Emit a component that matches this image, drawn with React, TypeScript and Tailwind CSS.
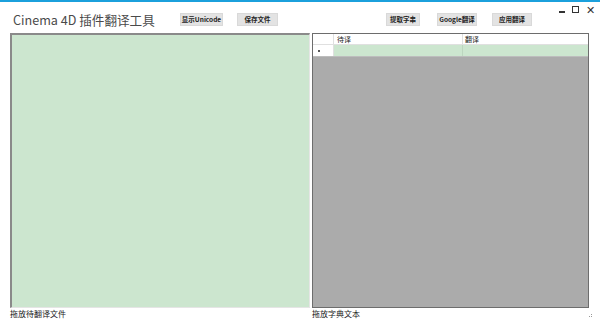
import React from "react";

const font = { fontFamily: '"Noto Sans CJK SC", "Noto Sans", sans-serif' };

function Btn({ label, w }: { label: string; w: string }) {
  return (
    <div
      className={`h-[13px] ${w} flex items-center justify-center whitespace-nowrap bg-[#e3e3e3] border border-[#d9d9d9] text-[6.5px] font-bold text-[#222] leading-none`}
    >
      {label}
    </div>
  );
}

export default function App() {
  return (
    <div
      className="w-[600px] h-[320px] bg-white overflow-hidden flex flex-col border-t-2 border-[#1ba0dc]"
      style={font}
    >
      <div className="h-[31px] flex items-start relative">
        <div className="ml-[13px] w-[155px] mt-[9px] text-[12.6px] leading-[18px] text-[#4a4a4a] whitespace-nowrap">
          Cinema 4D 插件翻译工具
        </div>
        <div className="ml-[12px] mt-[11px]">
          <Btn label="显示Unicode" w="w-[43px]" />
        </div>
        <div className="ml-[14px] mt-[11px]">
          <Btn label="保存文件" w="w-[41px]" />
        </div>
        <div className="ml-[108px] mt-[11px]">
          <Btn label="提取字串" w="w-[34px]" />
        </div>
        <div className="ml-[17px] mt-[11px]">
          <Btn label="Google翻译" w="w-[40px]" />
        </div>
        <div className="ml-[15px] mt-[11px]">
          <Btn label="应用翻译" w="w-[40px]" />
        </div>
        <div className="ml-auto mr-[5px] mt-[2px] flex items-center gap-[7px] text-[10px] text-[#333] leading-none">
          <span className="w-[6px] h-[2px] bg-[#333] mt-[5px]" />
          <span className="w-[7px] h-[7px] border border-[#333]" />
          <span className="text-[11px]">✕</span>
        </div>
      </div>
      <div className="flex pl-[10px] gap-[2px] h-[275px]">
        <div className="w-[300px] h-full bg-[#cce6cf] border-l-[2px] border-t-[2px] border-[#8a8a8a] border-r border-b border-r-[#e5e5e5] border-b-[#e5e5e5]" />
        <div className="w-[277px] h-full bg-[#ababab] border border-[#6d6d6d] flex flex-col">
          <div className="h-[11px] flex bg-white text-[7px] text-[#222] leading-[11px] border-b border-[#e0e0e0]">
            <div className="w-[21px] border-r border-[#e0e0e0]" />
            <div className="w-[129px] pl-[3px] border-r border-[#e0e0e0]">待译</div>
            <div className="flex-1 pl-[2px]">翻译</div>
          </div>
          <div className="h-[12px] flex border-b border-[#bdbdbd]">
            <div className="w-[21px] bg-white border-r border-[#e0e0e0] flex items-center pl-[5px]">
              <span className="w-[2px] h-[2px] bg-[#222] rounded-full" />
            </div>
            <div className="w-[129px] bg-[#cce6cf] border-r border-[#bcd6bf]" />
            <div className="flex-1 bg-[#cce6cf]" />
          </div>
        </div>
      </div>
      <div className="flex pl-[10px] text-[8px] leading-[12px] text-[#222] relative">
        <div className="w-[302px]">拖放待翻译文件</div>
        <div>拖放字典文本</div>
        <div className="absolute right-[8px] bottom-[3px] grid grid-cols-3 gap-[1px]">
          <span />
          <span />
          <span className="w-[1px] h-[1px] bg-[#999]" />
          <span />
          <span className="w-[1px] h-[1px] bg-[#999]" />
          <span className="w-[1px] h-[1px] bg-[#999]" />
        </div>
      </div>
    </div>
  );
}
